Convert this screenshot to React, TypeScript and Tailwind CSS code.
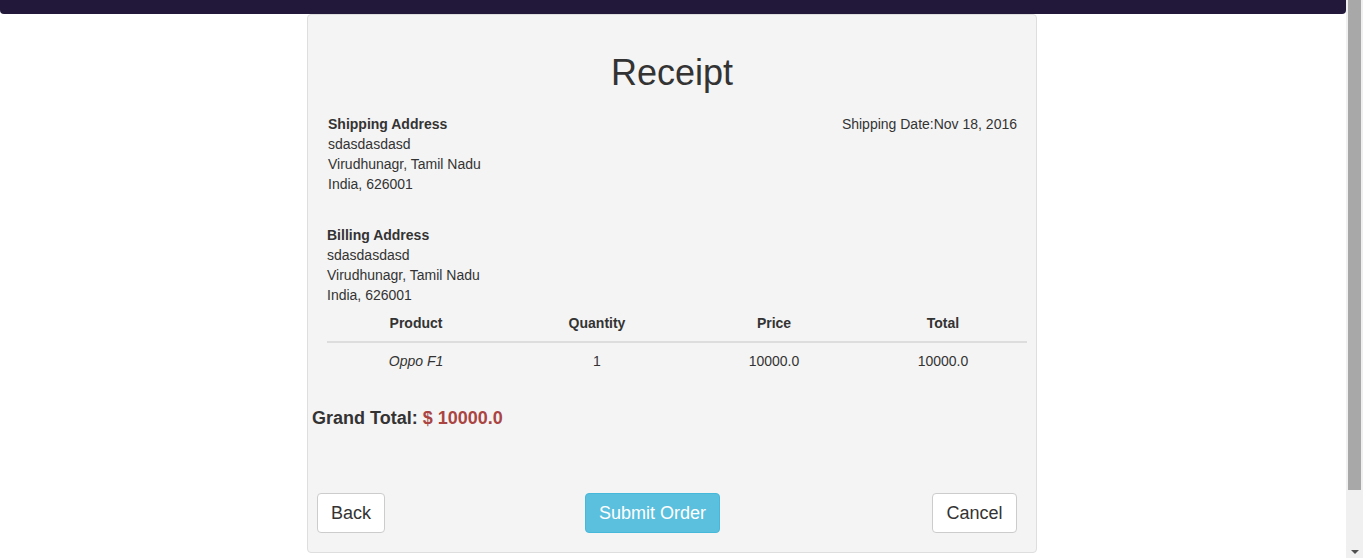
import React from "react";

interface Row {
  product: string;
  quantity: number;
  price: string;
  total: string;
}

const rows: Row[] = [{ product: "Oppo F1", quantity: 1, price: "10000.0", total: "10000.0" }];

const Address: React.FC<{ title: string; className?: string }> = ({ title, className }) => (
  <div className={className}>
    <div className="font-bold">{title}</div>
    <div>sdasdasdasd</div>
    <div>Virudhunagr, Tamil Nadu</div>
    <div>India, 626001</div>
  </div>
);

const App: React.FC = () => {
  return (
    <div
      className="flex h-[558px] w-[1366px] overflow-hidden bg-white text-[14px] leading-5 text-[#333]"
      style={{ fontFamily: '"Liberation Sans", Arial, sans-serif' }}
    >
      {/* page */}
      <div className="flex w-[1346px] flex-col">
        <div className="h-[14px] w-full rounded-b-[4px] bg-[#22193a]" />

        <div className="ml-[307px] flex w-[730px] flex-col rounded-[4px] border border-[#dedede] bg-[#f4f4f4] pb-[19px] pt-[38px]">
          <h1 className="text-center text-[36px] leading-[40px]">Receipt</h1>

          <div className="mt-[21px] flex justify-between px-[19px]">
            <Address title="Shipping Address" className="pl-px" />
            <div>Shipping Date:Nov 18, 2016</div>
          </div>

          <Address title="Billing Address" className="mt-[31px] px-[19px]" />

          <table className="ml-[19px] w-[700px] table-fixed border-collapse">
            <colgroup>
              <col className="w-[178px]" />
              <col className="w-[184px]" />
              <col className="w-[170px]" />
              <col className="w-[168px]" />
            </colgroup>
            <thead>
              <tr className="border-b-2 border-[#dddddd]">
                <th className="p-2 text-center font-bold">Product</th>
                <th className="p-2 text-center font-bold">Quantity</th>
                <th className="p-2 text-center font-bold">Price</th>
                <th className="p-2 text-center font-bold">Total</th>
              </tr>
            </thead>
            <tbody>
              {rows.map((r) => (
                <tr key={r.product}>
                  <td className="p-2 text-center italic">{r.product}</td>
                  <td className="p-2 text-center">{r.quantity}</td>
                  <td className="p-2 text-center">{r.price}</td>
                  <td className="p-2 text-center">{r.total}</td>
                </tr>
              ))}
            </tbody>
          </table>

          <h4 className="mt-[29px] pl-[4px] text-[18px] font-bold leading-[20px]">
            Grand Total: <span className="text-[#a94442]">$ 10000.0</span>
          </h4>

          <div className="mt-[65px] flex items-center pl-[9px] pr-[19px] text-[18px]">
            <button className="flex h-[40px] w-[68px] items-center justify-center rounded-[4px] border border-[#cccccc] bg-white">
              Back
            </button>
            <button className="ml-[200px] flex h-[40px] w-[135px] items-center justify-center rounded-[4px] border border-[#46b8da] bg-[#5bc0de] text-white">
              Submit Order
            </button>
            <button className="ml-auto flex h-[40px] w-[85px] items-center justify-center rounded-[4px] border border-[#cccccc] bg-white">
              Cancel
            </button>
          </div>
        </div>
      </div>

      {/* scrollbar */}
      <div className="flex h-full w-[17px] flex-col bg-[#f0f0f0] px-[2px]">
        <div className="h-[490px] w-full bg-[#a8a8a8]" />
        <div className="flex flex-1 items-end justify-center pb-[4px]">
          <svg width="8" height="4" viewBox="0 0 8 4">
            <path d="M0 0 H8 L4 4 Z" fill="#505050" />
          </svg>
        </div>
      </div>
      <div className="h-full flex-1 bg-white" />
    </div>
  );
};

export default App;
